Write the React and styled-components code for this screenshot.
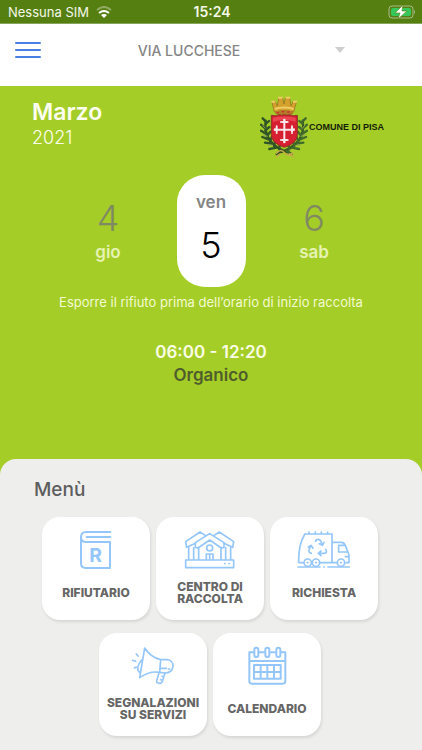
import React, { useState } from 'react';
import styled, { createGlobalStyle } from 'styled-components';

const GlobalStyle = createGlobalStyle`
	* {
		box-sizing: border-box;
	}

	html,
	body,
	#root {
		height: 100%;
	}

	body {
		margin: 0;
		background: #a5cd27;
		font-family: Inter, 'Liberation Sans', sans-serif;
	}

	button,
	select {
		font-family: inherit;
		border: 0;
		padding: 0;
		background: none;
		cursor: pointer;
	}
`;

const AppDiv = styled.div`
	display: flex;
	flex-flow: column;
	min-height: 100%;
`;

const StatusBar = styled.div`
	display: grid;
	grid-template-columns: 1fr auto 1fr;
	align-items: center;
	height: 24px;
	padding: 0 6px 0 8px;
	border-bottom: 1px solid #86a45a;
	background: #567f12;
	color: #f4f8e8;
	font-size: 13px;

	.Carrier {
		display: flex;
		align-items: center;
		gap: 7px;
	}

	.Battery {
		justify-self: end;
	}

	svg {
		display: block;
	}
`;

const Clock = styled.span`
	font-size: 14px;
	font-weight: 600;
`;

const Header = styled.header`
	display: flex;
	align-items: center;
	height: 62px;
	padding: 0 77px 10px 15px;
	background: #fff;
`;

const MenuButton = styled.button`
	display: flex;
	flex-flow: column;
	gap: 5px;
	width: 26px;

	span {
		height: 2px;
		border-radius: 1px;
		background: #4a80e4;
	}
`;

const StreetPicker = styled.label`
	display: flex;
	flex: 1;
	align-items: center;
	margin-left: 2px;

	select {
		flex: 1;
		appearance: none;
		color: #858585;
		font-size: 14px;
		font-weight: 500;
		text-align: center;
		text-align-last: center;
	}
`;

const CalendarSection = styled.section`
	display: flex;
	flex-flow: column;
	padding: 10px 32px 72px;
	background: #a5cd27;
`;

const MonthRow = styled.div`
	display: flex;
	justify-content: space-between;
	padding-right: 6px;
	color: #fdfff0;

	h1 {
		margin: 0;
		font-size: 23px;
		font-weight: 600;
		line-height: 32px;
	}

	.Year {
		font-size: 18px;
		font-weight: 300;
		line-height: 20px;
	}
`;

const Town = styled.div`
	display: flex;
	align-items: center;
	gap: 1px;
	color: #15200a;
	font-family: 'Liberation Sans', sans-serif;
	font-size: 9px;
	font-weight: bold;
`;

const DayStrip = styled.div`
	display: grid;
	grid-template-columns: repeat(3, 69px);
	justify-content: center;
	gap: 34px;
	margin-top: 17px;
`;

const DayButton = styled.button`
	display: flex;
	flex-flow: ${props => (props.$selected ? 'column-reverse' : 'column')};
	align-items: center;
	justify-content: center;
	gap: ${props => (props.$selected ? '15px' : '6px')};
	height: 112px;
	padding-bottom: ${props => (props.$selected ? '7px' : '0')};
	border-radius: 28px;
	background: ${props => (props.$selected ? '#fff' : 'transparent')};

	.Number {
		color: ${props => (props.$selected ? '#000' : '#7f8a62')};
		font-size: 36px;
		font-weight: 300;
		line-height: 36px;
	}

	.Weekday {
		color: ${props => (props.$selected ? '#858585' : '#e6f3b4')};
		font-size: 17px;
		font-weight: 600;
		line-height: 20px;
	}
`;

const Notice = styled.p`
	margin: 5px 0 0;
	color: #f3fad2;
	font-size: 13px;
	line-height: 20px;
	text-align: center;
`;

const Pickup = styled.div`
	margin-top: 29px;
	color: #4f5c2c;
	font-size: 17px;
	font-weight: 600;
	line-height: 23px;
	text-align: center;

	.Hours {
		color: #fafde4;
	}
`;

const MenuPanel = styled.main`
	flex: 1;
	padding: 19px 43px 13px 41px;
	border-radius: 16px 16px 0 0;
	background: #eeeeed;

	h2 {
		margin: 0 -7px 15px;
		color: #5d5d5d;
		font-size: 19px;
		font-weight: 500;
		line-height: 24px;
	}
`;

const MenuGrid = styled.nav`
	display: flex;
	flex-wrap: wrap;
	justify-content: center;
	gap: 13px 6px;
`;

const MenuCard = styled.button`
	display: flex;
	flex-flow: column;
	align-items: center;
	width: 108px;
	height: 103px;
	padding: 13px 0 4px;
	border-radius: 18px;
	background: #fff;
	box-shadow: 1px 2px 3px rgba(0, 0, 0, 0.1);

	svg {
		height: 39px;
	}

	.Label {
		display: flex;
		flex: 1;
		align-items: center;
		color: #666;
		font-size: 12px;
		font-weight: 800;
		line-height: 12px;
		white-space: pre-line;
	}
`;

const LineIcon = styled.svg`
	display: block;
	fill: none;
	stroke: #95c6f9;
	stroke-width: ${props => (props.$thin ? 5 : 6)};
	stroke-linecap: round;
	stroke-linejoin: round;

	text {
		fill: #95c6f9;
		stroke: none;
		font-size: 58px;
		font-weight: 700;
	}
`;

const BookIcon = () => (
	<LineIcon viewBox="150 59 94 117">
		<path d="M241 65h-73q-15 0-15 15v79q0 14 14 14h73V95h-72q-15 0-15-15M241 80h-71" />
		<text x="197" y="154" textAnchor="middle">R</text>
	</LineIcon>
);

const HousesIcon = () => (
	<LineIcon viewBox="103 59 154 117" $thin>
		<path d="M108 149h144v23H108zM117 148v-38M243 148v-38M132 148v-36M228 148v-36M147 148v-36M214 148v-36" />
		<path d="M137 99l-26 12-3-17 43-29 17 11M223 99l26 12 3-17-43-29-17 11" />
		<path d="M137 97l43-27 43 27v14l-8 2-35-24-35 24-8-2z" />
		<path d="M170 148v-17h20v17M180 132v15" />
		<circle cx="180" cy="113" r="9" />
		<path d="M225 160h1M238 160h1" />
	</LineIcon>
);

const TruckIcon = () => (
	<LineIcon viewBox="112 60 161 117" $thin>
		<path d="M136 72h81v86h-38M130 158h-11q-3 0-2-6c0-30 7-60 17-77l2-3M217 97h29q7 0 11 9l11 29v23h-9M217 158h14M257 106h-20v20h27M267 140h-10" />
		<path d="M148 71v-5M167 71v-5M185 71v-5M204 71v-5" />
		<circle cx="144" cy="158" r="11" />
		<circle cx="169" cy="158" r="11" />
		<circle cx="244" cy="158" r="11" />
		<path d="M143 158h2M168 158h2M243 158h2M115 171h66M192 171h2M205 171h64" />
		<path d="M168 94c1-8 12-8 16 0l3 10M179 101l9 5 5-9M155 130c-10-2-8-12-2-22M146 111l8-5 6 9M178 130h16c7 0 8-7 4-12M184 123l-8 7 8 7" />
	</LineIcon>
);

const MegaphoneIcon = () => (
	<LineIcon viewBox="122 63 132 117" $thin>
		<path d="M163 69c12 18 29 31 48 35h19c11 1 19 9 18 20-2 14-13 20-25 20l-15-2c-23-4-43 4-60 16zM211 104l-3 38M148 142c-9-7-8-21 6-37M212 130h16M234 132h4" />
		<path d="M206 143l-7 25q-2 6 9 7 6 1 8-6l8-25M211 164h1M215 154h1" />
		<path d="M138 87l5 6M127 106l9 3M132 129l6-3" />
	</LineIcon>
);

const CalendarIcon = () => (
	<LineIcon viewBox="129 66 117 117">
		<path d="M146 85h-13v87q0 7 8 7h92q8 0 8-7V85h-13M163 85h15M196 85h15M133 111h108" />
		<rect x="148" y="71" width="12" height="28" rx="6" />
		<rect x="181" y="71" width="12" height="28" rx="6" />
		<rect x="214" y="71" width="12" height="28" rx="6" />
		<path d="M147 123h80v41h-80zM167 123v41M187 123v41M207 123v41M147 144h80" />
	</LineIcon>
);

const WifiIcon = () => (
	<svg width="16" height="12" viewBox="0 0 16 12" fill="none" strokeWidth="2">
		<path d="M1 4q7-6 14 0" stroke="#fff" opacity=".35" />
		<path d="M3 7q5-4 10 0" stroke="#fff" />
		<path d="M5 9q3-2 6 0l-3 3z" fill="#fff" />
	</svg>
);

const BatteryIcon = () => (
	<svg width="28" height="14" viewBox="0 0 28 14">
		<rect x="1" y="1" width="24" height="12" rx="3" fill="none" stroke="#a8bd87" />
		<rect x="3" y="3" width="20" height="8" rx="2" fill="#35c759" />
		<path d="M26 5q2 2 0 4z" fill="#a8bd87" />
		<path d="M15 0L7 8h5l-2 6 9-8h-5z" fill="#fff" stroke="#567f12" strokeWidth=".6" />
	</svg>
);

const Crest = () => (
	<svg width="48" height="62" viewBox="0 0 144 186">
		{/* laurel and oak branches */}
		<g fill="none" strokeLinecap="round">
			<path d="M17 74Q8 145 88 171M128 74Q140 145 56 171" stroke="#35531c" strokeWidth="7" />
			<path
				d="M17 76l-9-9M17 84l10-9M15 96L3 86M16 103l12-10M18 113L3 104M21 120l10-13M25 130l-18-7M30 136l7-17M35 143l-20-3M42 150l4-17M49 155l-21 4M58 161l1-16M65 164l-15 10"
				stroke="#2f5426"
				strokeWidth="7"
			/>
			<path
				d="M128 76l9-9M128 84l-10-9M130 96l11-10M129 103l-12-10M127 113l14-9M124 120l-10-13M120 130l18-7M115 136l-7-17M110 143l20-3M103 150l-4-17M96 155l21 4M87 161l-1-16M80 164l15 10"
				stroke="#416b2b"
				strokeWidth="7"
			/>
			<path d="M8 88l8 8M10 116l12 5M24 147l14 1M134 88l-7 9M135 116l-12 5M121 147l-14 1" stroke="#8fa457" strokeWidth="3" />
			<path d="M50 171q13-15 24 0 12 13 25-1M61 174l-11 8M88 174l11 8" stroke="#c6ac49" strokeWidth="5" />
		</g>
		{/* mural crown */}
		<path d="M36 19l7 29q29-9 58 0l8-29-9-4-7 15-4-24H76l-4 18-4-18H56l-4 24-7-15z" fill="#d4a12d" stroke="#8f6728" strokeWidth="2" />
		<path d="M34 17h12M54 5h14M77 5h14M99 17h12M44 39q29-9 57 0" fill="none" stroke="#f0cd65" strokeWidth="6" />
		<path d="M45 47q28-8 55 0l-2 8H47z" fill="#b7782a" />
		<path d="M50 50h6M66 47h6M82 48h6" stroke="#c52b2b" strokeWidth="4" />
		{/* shield with the Pisan cross */}
		<path d="M34 58q13 4 22-2 9 2 17 0 8 2 17 0 9 6 22 2v58q0 26-39 38-39-12-39-38z" fill="#d61f30" stroke="#8f3029" strokeWidth="3" />
		<path d="M39 65q33-7 68 0v12Q72 66 39 78z" fill="#ea4651" />
		<path d="M73 76v58M49 101h48M65 78h16M65 132h16M50 93v16M96 93v16" stroke="#f7e9eb" strokeWidth="6" />
		<g fill="#f7e9eb">
			<circle cx="73" cy="72" r="4" />
			<circle cx="73" cy="138" r="4" />
			<circle cx="45" cy="101" r="4" />
			<circle cx="101" cy="101" r="4" />
			<circle cx="63" cy="78" r="3" />
			<circle cx="83" cy="78" r="3" />
			<circle cx="63" cy="132" r="3" />
			<circle cx="83" cy="132" r="3" />
			<circle cx="50" cy="91" r="3" />
			<circle cx="50" cy="111" r="3" />
			<circle cx="96" cy="91" r="3" />
			<circle cx="96" cy="111" r="3" />
		</g>
	</svg>
);

const days = [
	{ number: 4, weekday: 'gio' },
	{ number: 5, weekday: 'ven' },
	{ number: 6, weekday: 'sab' }
];

const menuItems = [
	{ label: 'RIFIUTARIO', Icon: BookIcon },
	{ label: 'CENTRO DI\nRACCOLTA', Icon: HousesIcon },
	{ label: 'RICHIESTA', Icon: TruckIcon },
	{ label: 'SEGNALAZIONI\nSU SERVIZI', Icon: MegaphoneIcon },
	{ label: 'CALENDARIO', Icon: CalendarIcon }
];

const App = () => {
	const [selectedDay, setSelectedDay] = useState(5);

	return (
		<AppDiv>
			<GlobalStyle />
			<StatusBar>
				<div className="Carrier">
					<span>Nessuna SIM</span>
					<WifiIcon />
				</div>
				<Clock>15:24</Clock>
				<div className="Battery">
					<BatteryIcon />
				</div>
			</StatusBar>
			<Header>
				<MenuButton type="button" aria-label="Apri menù">
					<span />
					<span />
					<span />
				</MenuButton>
				<StreetPicker htmlFor="street">
					<select id="street" aria-label="Via">
						<option>VIA LUCCHESE</option>
					</select>
					<svg width="10" height="6" viewBox="0 0 10 6">
						<path d="M0 0h10L5 6z" fill="#cfcfcf" />
					</svg>
				</StreetPicker>
			</Header>
			<CalendarSection>
				<MonthRow>
					<div>
						<h1>Marzo</h1>
						<div className="Year">2021</div>
					</div>
					<Town>
						<Crest />
						<span>COMUNE DI PISA</span>
					</Town>
				</MonthRow>
				<DayStrip>
					{days.map(day => (
						<DayButton
							key={day.number}
							type="button"
							$selected={day.number === selectedDay}
							onClick={() => setSelectedDay(day.number)}
						>
							<span className="Number">{day.number}</span>
							<span className="Weekday">{day.weekday}</span>
						</DayButton>
					))}
				</DayStrip>
				<Notice>Esporre il rifiuto prima dell’orario di inizio raccolta</Notice>
				<Pickup>
					<div className="Hours">06:00 - 12:20</div>
					<div>Organico</div>
				</Pickup>
			</CalendarSection>
			<MenuPanel>
				<h2>Menù</h2>
				<MenuGrid>
					{menuItems.map(({ label, Icon }) => (
						<MenuCard key={label} type="button">
							<Icon />
							<span className="Label">{label}</span>
						</MenuCard>
					))}
				</MenuGrid>
			</MenuPanel>
		</AppDiv>
	);
};

export default App;
